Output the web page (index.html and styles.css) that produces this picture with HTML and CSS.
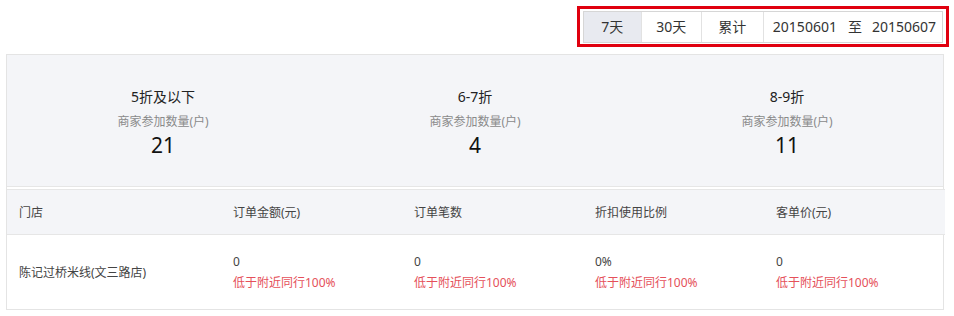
FILE: index.html
```html
<!DOCTYPE html>
<html lang="zh-CN">
<head>
  <meta charset="UTF-8">
  <title>折扣活动数据</title>
  <link rel="stylesheet" href="styles.css">
</head>
<body>
  <!-- Date range toolbar -->
  <div class="toolbar">
    <div class="highlight">
      <div class="range-group">
        <span class="tab tab-7 active">7天</span>
        <span class="tab tab-30">30天</span>
        <span class="tab tab-all">累计</span>
        <span class="date-range">20150601<em>至</em>20150607</span>
      </div>
    </div>
  </div>

  <!-- Report card -->
  <div class="card">
    <div class="stats">
      <div class="stat">
        <div class="stat-title">5折及以下</div>
        <div class="stat-label">商家参加数量(户)</div>
        <div class="stat-value">21</div>
      </div>
      <div class="stat">
        <div class="stat-title">6-7折</div>
        <div class="stat-label">商家参加数量(户)</div>
        <div class="stat-value">4</div>
      </div>
      <div class="stat">
        <div class="stat-title">8-9折</div>
        <div class="stat-label">商家参加数量(户)</div>
        <div class="stat-value">11</div>
      </div>
    </div>

    <table class="report">
      <colgroup>
        <col class="col-store">
        <col class="col-num">
        <col class="col-num">
        <col class="col-num">
        <col class="col-num">
      </colgroup>
      <thead>
        <tr>
          <th>门店</th>
          <th>订单金额(元)</th>
          <th>订单笔数</th>
          <th>折扣使用比例</th>
          <th>客单价(元)</th>
        </tr>
      </thead>
      <tbody>
        <tr>
          <td class="store">陈记过桥米线(文三路店)</td>
          <td><div class="cell"><span>0</span><span class="compare">低于附近同行100%</span></div></td>
          <td><div class="cell"><span>0</span><span class="compare">低于附近同行100%</span></div></td>
          <td><div class="cell"><span>0%</span><span class="compare">低于附近同行100%</span></div></td>
          <td><div class="cell"><span>0</span><span class="compare">低于附近同行100%</span></div></td>
        </tr>
      </tbody>
    </table>
  </div>
</body>
</html>
```

FILE: styles.css
```css
/* Base */
body {
  margin: 0;
  background: #ffffff;
  color: #333333;
  font-family: "Noto Sans", "Noto Sans CJK SC", sans-serif;
  font-size: 12px;
}

/* Toolbar with date range */
.toolbar {
  display: flex;
  justify-content: flex-end;
  padding: 6px 5px 0 0;
}

.highlight {
  border: 3px solid #e0000f;
  padding: 2px 3px 1px 3px;
}

.range-group {
  display: flex;
  height: 30px;
  border: 1px solid #d6d6d6;
  font-size: 14px;
  line-height: 30px;
  color: #333333;
}

.tab {
  text-align: center;
  border-right: 1px solid #e2e2e2;
  background: #ffffff;
}

.tab-7 { width: 57px; }
.tab-30 { width: 59px; }
.tab-all { width: 61px; }

.tab.active {
  background: #e8eaf0;
}

.date-range {
  padding: 0 6px 0 9px;
}

.date-range em {
  font-style: normal;
  margin: 0 10px 0 11px;
}

/* Card */
.card {
  width: 936px;
  margin: 7px 0 0 6px;
  border: 1px solid #e4e4e4;
  background: #ffffff;
}

.stats {
  display: grid;
  grid-template-columns: repeat(3, 1fr);
  background: #f4f5f8;
  padding: 31px 0 29px;
  border-bottom: 1px solid #e6e6e6;
  margin-bottom: 2px;
  text-align: center;
}

.stat-title {
  font-size: 14px;
  line-height: 22px;
  color: #222222;
}

.stat-label {
  margin-top: 3px;
  font-size: 12px;
  line-height: 22px;
  color: #8a8a8a;
}

.stat-value {
  font-size: 21px;
  line-height: 24px;
  color: #111111;
}

/* Table */
.report {
  width: 100%;
  border-collapse: collapse;
  table-layout: fixed;
}

.col-store { width: 214px; }
.col-num { width: 181px; }

.report th {
  height: 44px;
  padding: 0 12px;
  background: #f4f5f8;
  border-top: 1px solid #e6e6e6;
  border-bottom: 1px solid #e6e6e6;
  font-weight: normal;
  text-align: left;
  color: #444444;
}

.report td {
  height: 74px;
  padding: 16px 12px 0;
  vertical-align: top;
  color: #444444;
  box-sizing: border-box;
}

.report td.store {
  padding-top: 0;
  vertical-align: middle;
}

.cell {
  display: flex;
  flex-direction: column;
  line-height: 21px;
}

.compare {
  color: #e5505a;
}
```
